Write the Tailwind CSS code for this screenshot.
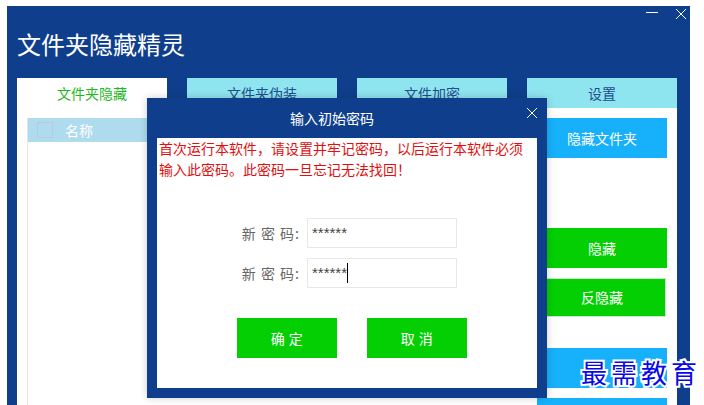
<!DOCTYPE html>
<html lang="en">
<head>
  <meta charset="UTF-8" />
  <title>文件夹隐藏精灵</title>
  <script src="https://cdn.jsdelivr.net/npm/@tailwindcss/browser@4"></script>
</head>
<body class="bg-white w-[704px] h-[405px] overflow-hidden relative font-['Noto_Sans_CJK_SC','Noto_Sans',sans-serif]">

  <!-- Main window -->
  <div class="absolute left-[7px] top-[6px] w-[683px] h-[399px] bg-[#0f3f8c] overflow-hidden">

    <!-- Title bar -->
    <div class="h-[72px] relative">
      <h1 class="absolute left-[10px] top-[21px] text-[24px] leading-[34px] text-white">文件夹隐藏精灵</h1>
      <div class="absolute left-[639px] top-[6px] w-[12px] h-px bg-white"></div>
      <svg class="absolute left-[668px] top-[2px]" width="12" height="12" viewBox="0 0 12 12" fill="none" stroke="white" stroke-width="1"><path d="M1 1l10 10M11 1L1 11" /></svg>
    </div>

    <!-- Tabs -->
    <div class="flex gap-[20px] ml-[10px] h-[30px] text-[14px]">
      <div class="w-[150px] bg-white text-[#1fb81f] flex items-center justify-center">文件夹隐藏</div>
      <div class="w-[150px] bg-[#8fe5ef] text-[#1f4e8c] flex items-center justify-center">文件夹伪装</div>
      <div class="w-[150px] bg-[#8fe5ef] text-[#1f4e8c] flex items-center justify-center">文件加密</div>
      <div class="w-[150px] bg-[#8fe5ef] text-[#1f4e8c] flex items-center justify-center">设置</div>
    </div>

    <!-- Panel -->
    <div class="ml-[10px] w-[660px] h-[297px] bg-white flex pt-[10px] pl-[10px] pr-[10px] justify-between">
      <div class="w-[480px] border-l border-[#e5e5e5]">
        <div class="h-[24px] bg-[#aedcee] flex items-center text-white text-[14px]">
          <div class="w-[16px] h-[16px] border border-[#bcc9d8] ml-[9px] mr-[12px]"></div>
          <span>名称</span>
        </div>
      </div>
      <div class="w-[130px] flex flex-col text-white text-[14px]">
        <div class="h-[40px] shrink-0 bg-[#17b0fb] flex items-center justify-center">隐藏文件夹</div>
        <div class="h-[40px] shrink-0 bg-[#03cf03] flex items-center justify-center mt-[70px]">隐藏</div>
        <div class="h-[39px] shrink-0 w-[129px] bg-[#03cf03] border border-[#c8e8c8] flex items-center justify-center mt-[10px] pl-px">反隐藏</div>
        <div class="h-[40px] shrink-0 bg-[#17b0fb] mt-[31px]"></div>
        <div class="h-[40px] shrink-0 bg-[#17b0fb] mt-[10px]"></div>
      </div>
    </div>
  </div>

  <!-- Password dialog -->
  <div class="absolute left-[147px] top-[98px] w-[400px] h-[300px] bg-[#0f3f8c] shadow-[0_0_8px_rgba(0,0,0,0.2)] flex flex-col">
    <div class="h-[40px] relative flex items-center justify-center pr-[30px] text-white text-[14px]">
      输入初始密码
      <svg class="absolute left-[379px] top-[9px]" width="12" height="12" viewBox="0 0 12 12" fill="none" stroke="white" stroke-width="1"><path d="M1 1l10 10M11 1L1 11" /></svg>
    </div>
    <div class="mx-[10px] w-[380px] h-[250px] bg-white">
      <p class="pl-[2px] text-[14px] leading-[21px] text-[#e01010] w-[372px]">首次运行本软件，请设置并牢记密码，以后运行本软件必须输入此密码。此密码一旦忘记无法找回！</p>

      <div class="mt-[38px] flex items-center h-[30px]">
        <span class="w-[150px] pr-[7px] text-right text-[14px] tracking-[1px] text-[#666]">新 密 码:</span>
        <div class="w-[150px] h-[30px] border border-[#e8e8e8] pl-[4px] text-[15px] leading-[28px] text-[#444] font-['Liberation_Sans']">******</div>
      </div>
      <div class="mt-[10px] flex items-center h-[30px]">
        <span class="w-[150px] pr-[7px] text-right text-[14px] tracking-[1px] text-[#666]">新 密 码:</span>
        <div class="w-[150px] h-[30px] border border-[#e8e8e8] pl-[4px] text-[15px] leading-[28px] text-[#444] font-['Liberation_Sans'] relative">******<span class="absolute left-[39px] top-[4px] w-px h-[20px] bg-black"></span></div>
      </div>

      <div class="mt-[30px] ml-[80px] flex gap-[30px] text-white text-[14px]">
        <div class="w-[100px] h-[40px] bg-[#03cf03] flex items-center justify-center tracking-[0.5px]">确 定</div>
        <div class="w-[100px] h-[40px] bg-[#03cf03] flex items-center justify-center tracking-[0.5px]">取 消</div>
      </div>
    </div>
  </div>

  <!-- Watermark -->
  <div class="absolute left-[581px] top-[353px] text-[26px] leading-[38px] tracking-[4px] text-[#0808e8] whitespace-nowrap [-webkit-text-stroke:4px_white] [paint-order:stroke_fill]">最需教育</div>
</body>
</html>
